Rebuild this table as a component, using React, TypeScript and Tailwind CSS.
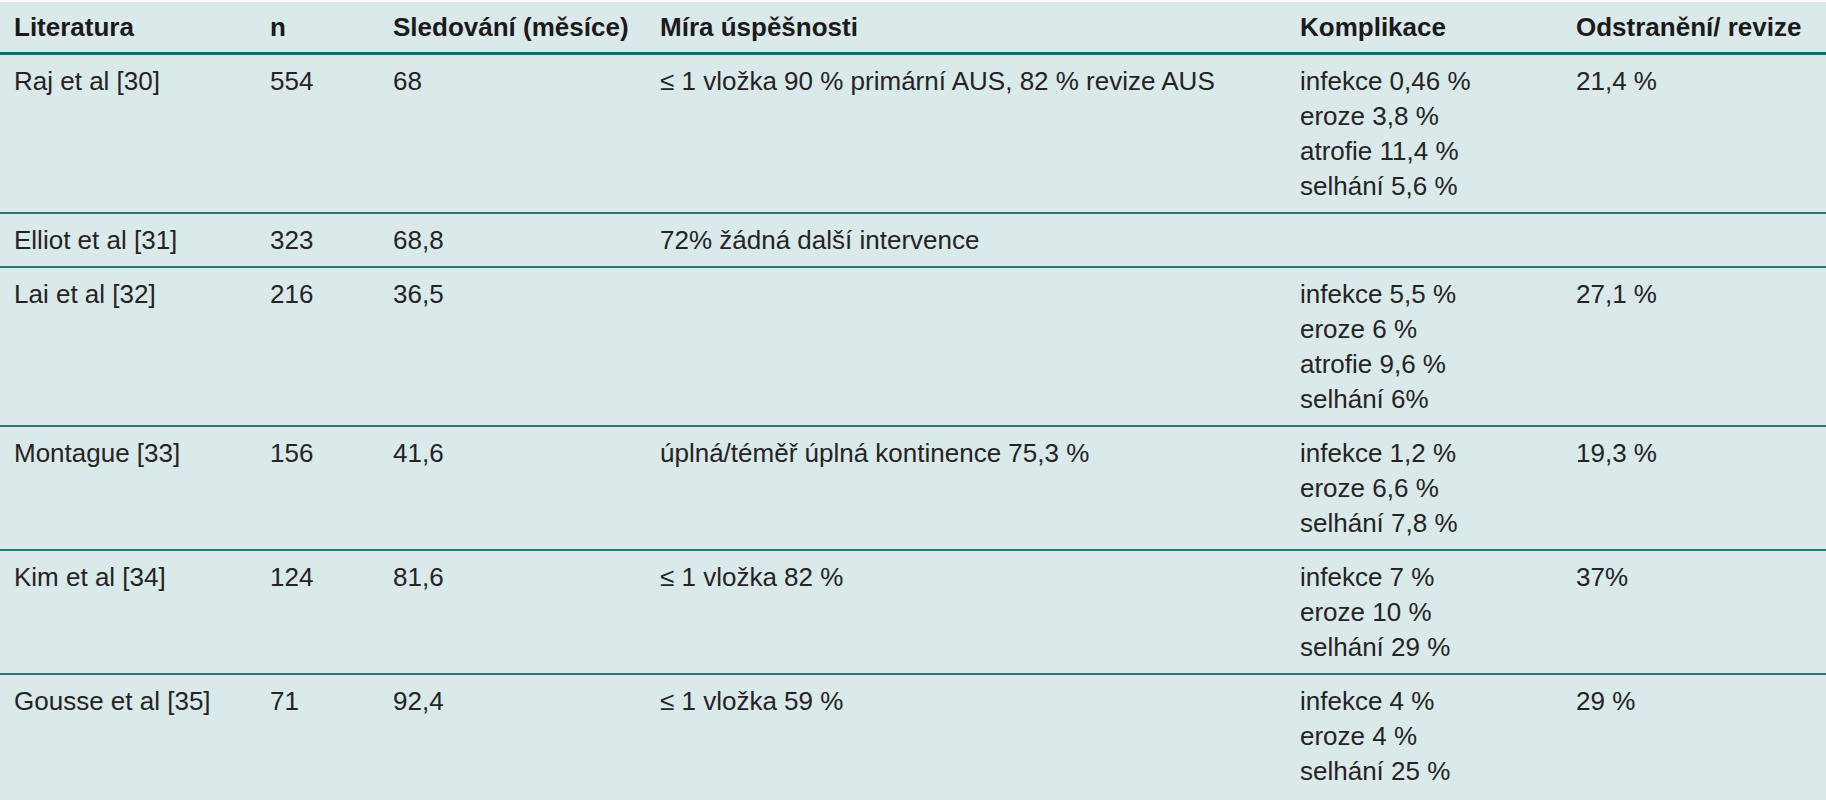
import React from 'react';

interface Row {
  author: string;
  n: string;
  followUp: string;
  success: string;
  complications: string[];
  revision: string;
}

const rows: Row[] = [
  {
    author: 'Raj et al [30]',
    n: '554',
    followUp: '68',
    success: '≤ 1 vložka 90 % primární AUS, 82 % revize AUS',
    complications: ['infekce 0,46 %', 'eroze 3,8 %', 'atrofie 11,4 %', 'selhání 5,6 %'],
    revision: '21,4 %',
  },
  {
    author: 'Elliot et al [31]',
    n: '323',
    followUp: '68,8',
    success: '72% žádná další intervence',
    complications: [],
    revision: '',
  },
  {
    author: 'Lai et al [32]',
    n: '216',
    followUp: '36,5',
    success: '',
    complications: ['infekce 5,5 %', 'eroze 6 %', 'atrofie 9,6 %', 'selhání 6%'],
    revision: '27,1 %',
  },
  {
    author: 'Montague [33]',
    n: '156',
    followUp: '41,6',
    success: 'úplná/téměř úplná kontinence 75,3 %',
    complications: ['infekce 1,2 %', 'eroze 6,6 %', 'selhání 7,8 %'],
    revision: '19,3 %',
  },
  {
    author: 'Kim et al [34]',
    n: '124',
    followUp: '81,6',
    success: '≤ 1 vložka 82 %',
    complications: ['infekce 7 %', 'eroze 10 %', 'selhání 29 %'],
    revision: '37%',
  },
  {
    author: 'Gousse et al [35]',
    n: '71',
    followUp: '92,4',
    success: '≤ 1 vložka 59 %',
    complications: ['infekce 4 %', 'eroze 4 %', 'selhání 25 %'],
    revision: '29 %',
  },
];

const cols = 'grid grid-cols-[256px_123px_267px_640px_276px_1fr]';

export default function App() {
  return (
    <div className="min-h-[800px] bg-white pt-[2px] font-['Liberation_Sans',Arial,sans-serif] text-[26px] leading-[35px]">
      <div className="min-h-[798px] bg-[#dae9ea] text-[#262324]">
        {/* header */}
        <div className={`${cols} border-b-[3px] border-[#1d6a6d] pt-[8px] pb-[7px] font-bold text-[#1c1a1b]`}>
          <div className="pl-[14px]">Literatura</div>
          <div className="pl-[14px]">n</div>
          <div className="pl-[14px]">Sledování (měsíce)</div>
          <div className="pl-[14px]">Míra úspěšnosti</div>
          <div className="pl-[14px]">Komplikace</div>
          <div className="pl-[14px]">Odstranění/ revize</div>
        </div>

        {rows.map((row, i) => (
          <div
            key={row.author}
            className={`${cols} pt-[9px] pb-[8px] ${
              i < rows.length - 1 ? 'border-b-2 border-[#2a7377]' : ''
            }`}
          >
            <div className="pl-[14px]">{row.author}</div>
            <div className="pl-[14px]">{row.n}</div>
            <div className="pl-[14px]">{row.followUp}</div>
            <div className="pl-[14px]">{row.success}</div>
            <div className="pl-[14px] flex flex-col">
              {row.complications.map((c) => (
                <span key={c}>{c}</span>
              ))}
            </div>
            <div className="pl-[14px]">{row.revision}</div>
          </div>
        ))}
      </div>
    </div>
  );
}
